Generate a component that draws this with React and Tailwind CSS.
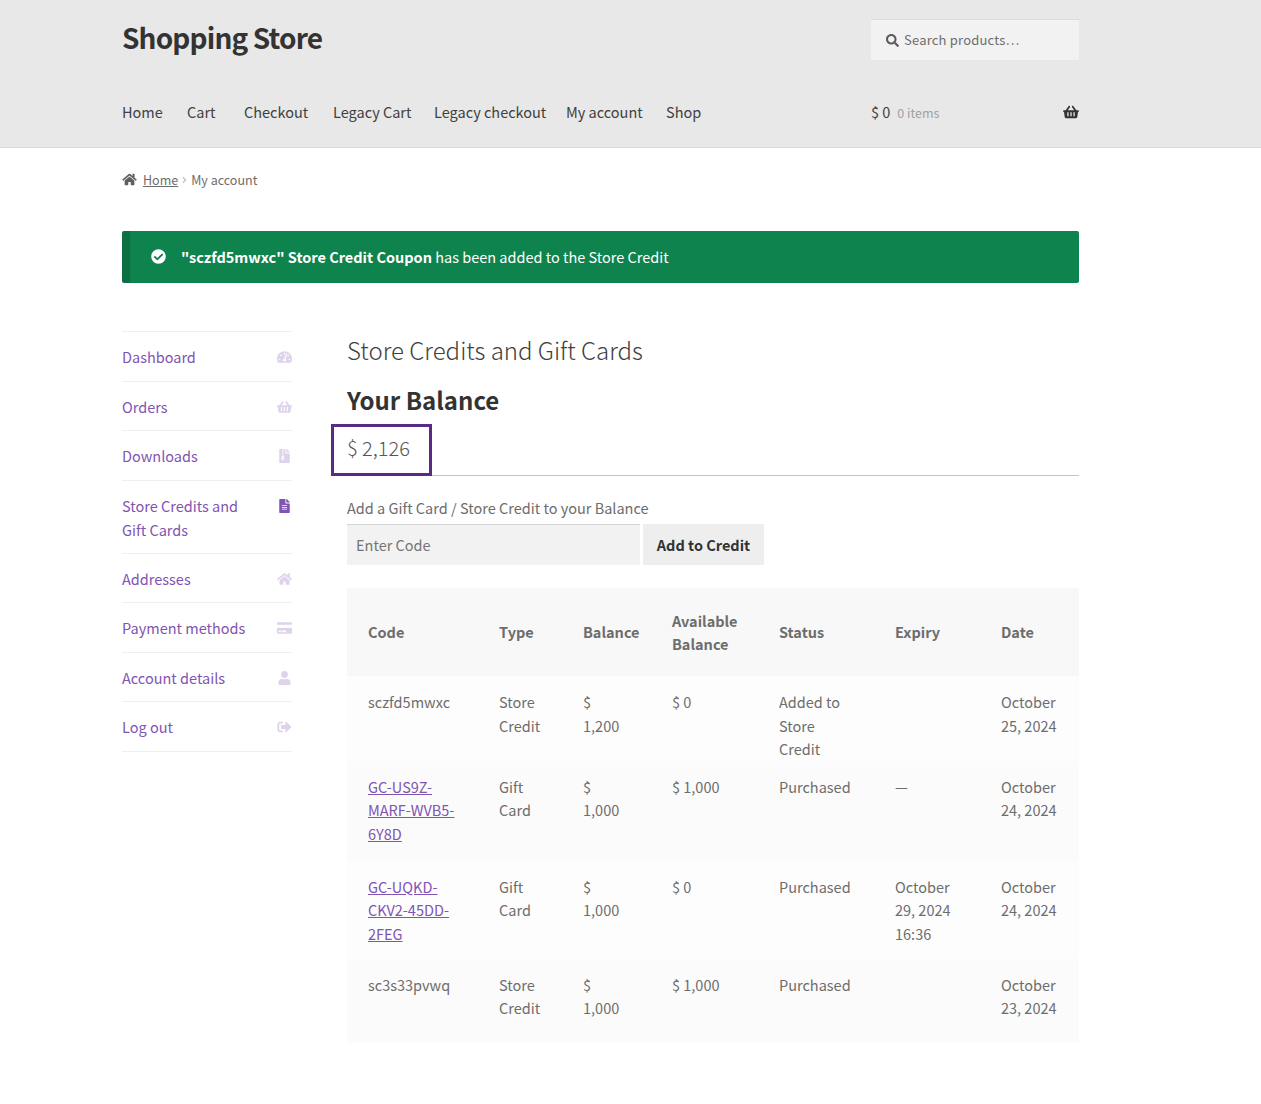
import React from "react";
import { FaSearch, FaShoppingBasket, FaHome, FaCheckCircle, FaTachometerAlt, FaFileArchive, FaFileAlt, FaCreditCard, FaUser, FaSignOutAlt, FaAngleRight } from "react-icons/fa";

const nav = [
  ["Home", "w-[65px]"],
  ["Cart", "w-[57px]"],
  ["Checkout", "w-[89px]"],
  ["Legacy Cart", "w-[101px]"],
  ["Legacy checkout", "w-[132px]"],
  ["My account", "w-[100px]"],
  ["Shop", "w-[50px]"],
];

const side = [
  ["Dashboard", FaTachometerAlt, "h-[50px]"],
  ["Orders", FaShoppingBasket, "h-[49px]"],
  ["Downloads", FaFileArchive, "h-[50px]"],
  ["Store Credits and Gift Cards", FaFileAlt, "h-[73px]", true],
  ["Addresses", FaHome, "h-[49px]"],
  ["Payment methods", FaCreditCard, "h-[50px]"],
  ["Account details", FaUser, "h-[49px]"],
  ["Log out", FaSignOutAlt, "h-[50px]"],
];

const head = ["Code", "Type", "Balance", "Available Balance", "Status", "Expiry", "Date"];
const rows = [
  { h: "h-[75px]", bg: "bg-[#fdfdfd]", c: ["sczfd5mwxc", "Store Credit", "$ 1,200", "$ 0", "Added to Store Credit", "", "October 25, 2024"] },
  { h: "h-[100px]", bg: "bg-[#fbfbfb]", link: true, c: ["GC-US9Z-MARF-WVB5-6Y8D", "Gift Card", "$ 1,000", "$ 1,000", "Purchased", "—", "October 24, 2024"] },
  { h: "h-[98px]", bg: "bg-[#fdfdfd]", link: true, c: ["GC-UQKD-CKV2-45DD-2FEG", "Gift Card", "$ 1,000", "$ 0", "Purchased", "October 29, 2024 16:36", "October 24, 2024"] },
  { h: "h-[84px]", bg: "bg-[#fbfbfb]", c: ["sc3s33pvwq", "Store Credit", "$ 1,000", "$ 1,000", "Purchased", "", "October 23, 2024"] },
];

export default function App() {
  return (
    <div className="min-h-[1104px] bg-white text-[14.5px] leading-[23.5px] text-[#6d6d6d] font-['Noto_Sans_CJK_SC','Liberation_Sans',sans-serif]">
      <header className="h-[148px] border-b border-[#d9d9d9] bg-[#e8e8e8]">
        <div className="ml-[122px] w-[957px]">
          <div className="flex h-[91px] items-start justify-between">
            <div className="mt-[19px] text-[28px] leading-[36px] font-bold tracking-[-0.85px] text-[#333333]">Shopping Store</div>
            <div className="mt-[19px] flex h-[41px] w-[208px] items-center gap-[5px] border-t border-[#dcdcdc] bg-[#f2f2f2] pl-[15px] text-[13px] tracking-[0.2px] text-[#6d6d6d]">
              <FaSearch className="h-[13px] w-[13px] text-[#5b5b5b]" />
              <span>Search products…</span>
            </div>
          </div>
          <div className="flex h-[42px] items-center justify-between">
            <nav className="flex text-[14.5px] text-[#404040]">
              {nav.map(([t, w]) => (
                <span key={t} className={w}>{t}</span>
              ))}
            </nav>
            <div className="flex w-[208px] items-center justify-between">
              <div className="flex items-baseline gap-[7px] text-[#404040]">
                <span>$ 0</span>
                <span className="text-[12.5px] text-[#a0a0a0]">0 items</span>
              </div>
              <FaShoppingBasket className="h-[14px] w-[16px] text-[#333333]" />
            </div>
          </div>
        </div>
      </header>

      <div className="ml-[122px] w-[957px]">
        <div className="flex h-[62px] items-center pt-[1px] text-[12.5px] text-[#6d6d6d]">
          <FaHome className="mr-[6px] h-[13px] w-[15px] text-[#606060]" />
          <span className="underline">Home</span>
          <FaAngleRight className="mx-[3px] h-[10px] w-[7px] text-[#c8c8c8]" />
          <span>My account</span>
        </div>

        <div className="mt-[21px] flex h-[52px] items-center rounded-[2px] border-l-[8px] border-[#0d7044] bg-[#0f834d] pb-[1px] pl-[21px] text-[14.5px] text-white">
          <FaCheckCircle className="mr-[15px] h-[15px] w-[15px]" />
          <span><strong className="font-semibold">"sczfd5mwxc" Store Credit Coupon</strong> has been added to the Store Credit</span>
        </div>

        <div className="mt-[48px] flex items-start">
          <aside className="w-[170px] border-t border-[#efefef]">
            {side.map(([t, Icon, h, active]) => (
              <div key={t} className={`flex ${h} items-start justify-between border-b border-[#efefef] pt-[13px] text-[#7f54b3]`}>
                <span className={active ? "w-[135px]" : ""}>{t}</span>
                <Icon className={`mt-[5px] h-[14px] w-[15px] shrink-0 ${active ? "" : "opacity-25"}`} />
              </div>
            ))}
          </aside>

          <main className="ml-[39px] w-[748px]">
            <div className="pl-[16px]">
              <h1 className="h-[38px] text-[24px] leading-[38px] font-light text-[#404040]">Store Credits and Gift Cards</h1>
              <h2 className="mt-[13px] h-[36px] text-[24px] leading-[36px] font-semibold text-[#333333]">Your Balance</h2>
            </div>
            <div className="mt-[6px] h-[52px] border-b border-[#c4c4c4]">
              <div className="flex h-[52px] w-[101px] items-center border-[3px] border-[#5b2a86] pb-[4px] pl-[13px] text-[20px] font-light text-[#555555]">$ 2,126</div>
            </div>
            <div className="pl-[16px]">
              <div className="mt-[20px] h-[28px] leading-[24px]">Add a Gift Card / Store Credit to your Balance</div>
              <div className="flex h-[41px] gap-[3px]">
                <div className="flex w-[293px] items-center border-t border-[#d4d4d4] bg-[#f2f2f2] pl-[9px] text-[#757575]">Enter Code</div>
                <div className="flex w-[121px] items-center justify-center bg-[#eeeeee] font-semibold text-[#333333]">Add to Credit</div>
              </div>
              <table className="mt-[23px] w-[732px] table-fixed border-collapse">
                <colgroup>
                  <col className="w-[131px]" />
                  <col className="w-[84px]" />
                  <col className="w-[89px]" />
                  <col className="w-[107px]" />
                  <col className="w-[116px]" />
                  <col className="w-[106px]" />
                  <col className="w-[99px]" />
                </colgroup>
                <thead>
                  <tr className="h-[88px] bg-[#f8f8f8]">
                    {head.map((t) => (
                      <th key={t} className="pl-[21px] pr-[21px] text-left align-middle font-semibold whitespace-normal text-[#6d6d6d]">{t}</th>
                    ))}
                  </tr>
                </thead>
                <tbody>
                  {rows.map((r) => (
                    <tr key={r.c[0]} className={`${r.h} ${r.bg}`}>
                      {r.c.map((t, i) => (
                        <td key={i} className="pt-[14px] pl-[21px] pr-[21px] align-top break-words">
                          {i === 0 && r.link ? <span className="text-[#7f54b3] underline">{t}</span> : t}
                        </td>
                      ))}
                    </tr>
                  ))}
                </tbody>
              </table>
            </div>
          </main>
        </div>
      </div>
    </div>
  );
}
